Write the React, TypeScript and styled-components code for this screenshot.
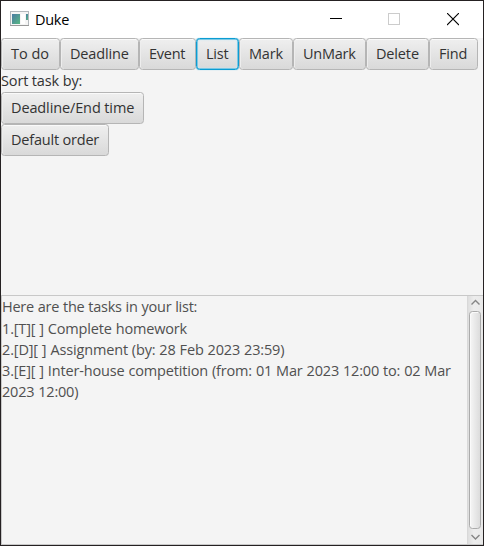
import React from "react";
import styled, { createGlobalStyle } from "styled-components";

const GlobalStyle = createGlobalStyle`
  * { box-sizing: border-box; }
  html, body { margin: 0; padding: 0; overflow: hidden; background: #231f20; }
`;

const Window = styled.div`
  width: 484px;
  height: 546px;
  display: flex;
  flex-direction: column;
  border: 1px solid #252122;
  background: #f4f4f4;
  color: #333;
  font-family: "Open Sans", "Noto Sans", sans-serif;
  font-size: 14.5px;
`;

const TitleBar = styled.header`
  height: 37px;
  flex: none;
  display: flex;
  align-items: center;
  padding-left: 9px;
  background: #fff;
  color: #000;
`;

const Title = styled.span`
  flex: 1;
  margin-left: 6px;
  line-height: 20px;
  letter-spacing: -0.3px;
`;

const Control = styled.span<{ $width: number }>`
  width: ${(p) => p.$width}px;
  height: 36px;
  display: flex;
  align-items: center;
  justify-content: flex-start;
`;

const Toolbar = styled.nav`
  display: flex;
  flex: none;
`;

const Button = styled.button<{ $width: number; $tracking: number; $focused?: boolean }>`
  width: ${(p) => p.$width}px;
  height: 32px;
  flex: none;
  padding: 0 0 1px 9px;
  border: 1px solid ${(p) => (p.$focused ? "#0b9cd2" : "#b5b5b5")};
  border-radius: 3.5px;
  background: linear-gradient(#efefef, #d9d9d9);
  box-shadow: ${(p) =>
    p.$focused
      ? "0 0 1px #5cc3e6, inset 0 0 0 0.5px #2ba9d9, inset 0 0 2px 1px #c9e8f3"
      : "inset 0 1px #fafafa, inset 1px 0 #ededed"};
  color: #333;
  font: inherit;
  line-height: 20px;
  letter-spacing: ${(p) => p.$tracking}px;
  text-align: left;
  white-space: nowrap;
`;

const SortPanel = styled.section`
  flex: 1;
  display: flex;
  flex-direction: column;
  align-items: flex-start;
`;

const Label = styled.span`
  height: 22px;
  line-height: 21px;
  letter-spacing: -0.14px;
`;

const Output = styled.section`
  height: 250px;
  flex: none;
  display: flex;
  border: 1px solid #c8c8c8;
  border-right-width: 0;
`;

const Lines = styled.div`
  flex: 1;
  padding-top: 0.4px;
  color: #505050;
`;

const Line = styled.div<{ $tracking: number }>`
  height: 21.2px;
  line-height: 21px;
  letter-spacing: ${(p) => p.$tracking}px;
  word-spacing: 0.3px;
  white-space: nowrap;
`;

const ScrollBar = styled.div`
  width: 16px;
  display: flex;
  flex-direction: column;
  align-items: center;
  border-left: 1px solid #d8d8d8;
  background: linear-gradient(90deg, #dedede, #ededed 40%, #e8e8e8);
`;

const Arrow = styled.span`
  height: 15px;
  margin-right: 1px;
  display: flex;
  align-items: center;
`;

const Thumb = styled.div`
  width: 12px;
  margin-right: 1px;
  flex: 1;
  border: 1px solid #ababab;
  border-radius: 3.5px;
  background: linear-gradient(90deg, #f6f6f6, #dcdcdc);
  box-shadow: inset 1px 1px #fafafa;
`;

const actions = [
  { label: "To do", width: 59, tracking: 0 },
  { label: "Deadline", width: 79, tracking: -0.15 },
  { label: "Event", width: 57, tracking: -0.25 },
  { label: "List", width: 43, tracking: -0.2, focused: true },
  { label: "Mark", width: 54, tracking: -0.2 },
  { label: "UnMark", width: 73, tracking: -0.25 },
  { label: "Delete", width: 63, tracking: -0.15 },
  { label: "Find", width: 49, tracking: -0.2 },
];

const lines = [
  { text: "Here are the tasks in your list:", tracking: -0.24 },
  { text: "1.[T][ ] Complete homework", tracking: -0.16 },
  { text: "2.[D][ ] Assignment (by: 28 Feb 2023 23:59)", tracking: -0.15 },
  { text: "3.[E][ ] Inter-house competition (from: 01 Mar 2023 12:00 to: 02 Mar", tracking: -0.16 },
  { text: "2023 12:00)", tracking: -0.2 },
];

const AppIcon = () => (
  <svg width="19" height="17" viewBox="0 0 19 17">
    <defs>
      <linearGradient id="screen" x1="0" y1="0" x2="1" y2="1">
        <stop offset="0" stopColor="#4a7ba3" />
        <stop offset="1" stopColor="#58b883" />
      </linearGradient>
    </defs>
    <rect x=".5" y=".5" width="18" height="14" fill="#f5f5f5" stroke="#b3b8bc" />
    <path d="M0 14.5h19" stroke="#999" />
    <rect x="2" y="3" width="8" height="10" fill="url(#screen)" />
    <rect x="11" y="3" width="4" height="10" fill="#fff" />
    <rect x="16" y="3" width="2" height="6" fill="url(#screen)" />
  </svg>
);

export default function App() {
  return (
    <>
      <GlobalStyle />
      <Window>
        <TitleBar>
          <AppIcon />
          <Title>Duke</Title>
          <Control $width={58}>
            <svg width="12" height="13"><path d="M0 5.5h12" stroke="#000" /></svg>
          </Control>
          <Control $width={59}>
            <svg width="12" height="13"><rect x=".5" y=".5" width="11" height="11" fill="none" stroke="#ccc" /></svg>
          </Control>
          <Control $width={36}>
            <svg width="12" height="13"><path d="M0 0l12 12M12 0L0 12" stroke="#000" strokeWidth="1.1" /></svg>
          </Control>
        </TitleBar>
        <Toolbar>
          {actions.map((a) => (
            <Button key={a.label} $width={a.width} $tracking={a.tracking} $focused={a.focused}>
              {a.label}
            </Button>
          ))}
        </Toolbar>
        <SortPanel>
          <Label>Sort task by:</Label>
          <Button $width={143} $tracking={-0.12}>Deadline/End time</Button>
          <Button $width={108} $tracking={-0.2}>Default order</Button>
        </SortPanel>
        <Output>
          <Lines>
            {lines.map((l) => (
              <Line key={l.text} $tracking={l.tracking}>{l.text}</Line>
            ))}
          </Lines>
          <ScrollBar>
            <Arrow>
              <svg width="11" height="9"><path d="M1.5 5.5L5.5 1.5L9.5 5.5" fill="none" stroke="#858585" strokeWidth="1.4" /></svg>
            </Arrow>
            <Thumb />
            <Arrow>
              <svg width="11" height="7"><path d="M1.5 2L5.5 6L9.5 2" fill="none" stroke="#858585" strokeWidth="1.4" /></svg>
            </Arrow>
          </ScrollBar>
        </Output>
      </Window>
    </>
  );
}
